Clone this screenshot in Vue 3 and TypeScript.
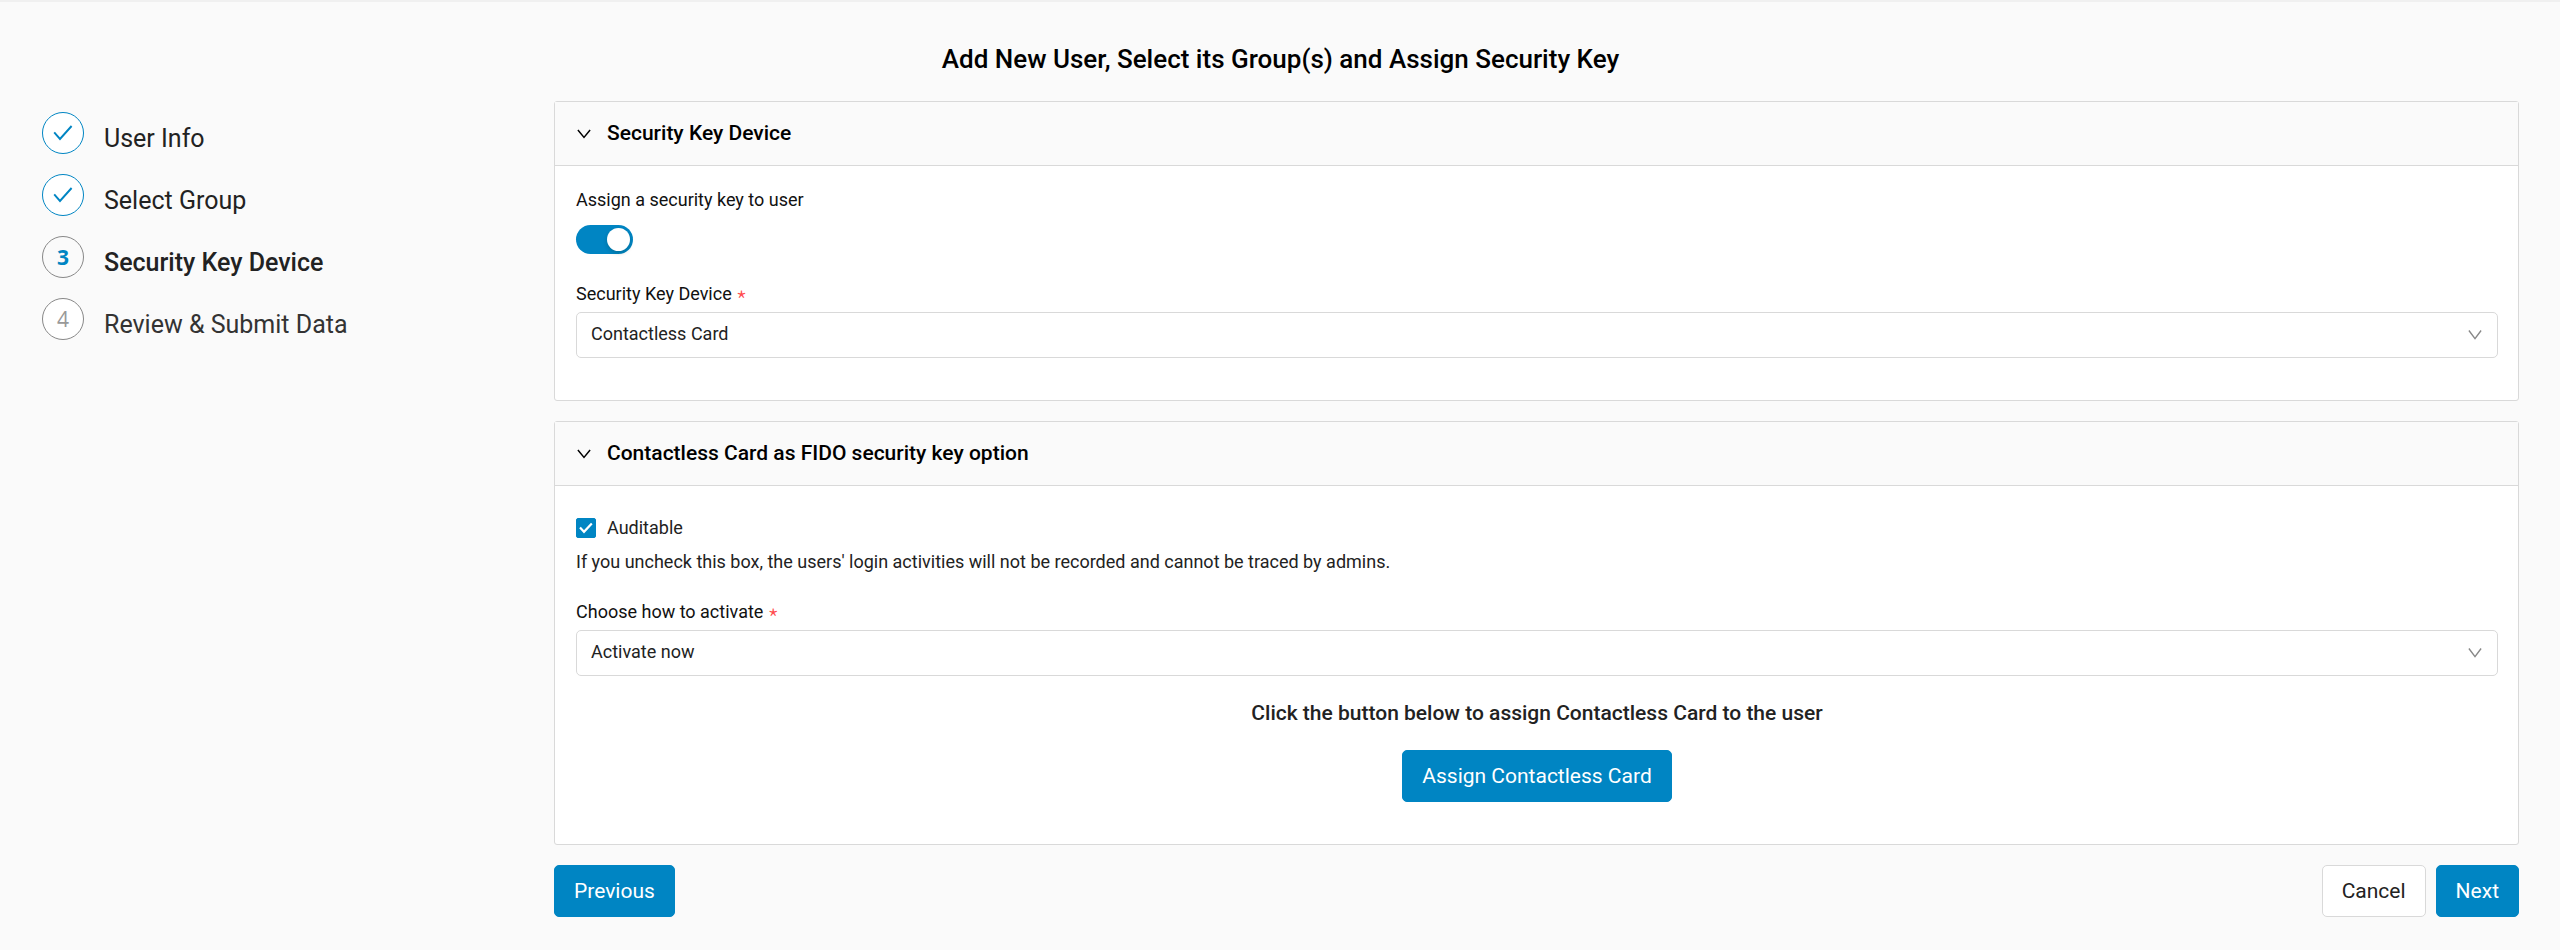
<script setup lang="ts">
import { ref } from 'vue'

interface Step {
  label: string
  state: 'done' | 'active' | 'waiting'
}

const steps: Step[] = [
  { label: 'User Info', state: 'done' },
  { label: 'Select Group', state: 'done' },
  { label: 'Security Key Device', state: 'active' },
  { label: 'Review & Submit Data', state: 'waiting' },
]

const assignKey = ref(true)
const auditable = ref(true)
const device = ref('Contactless Card')
const activation = ref('Activate now')
const deviceOpen = ref(true)
const optionOpen = ref(true)
</script>

<template>
  <div class="page">
    <h1 class="page-title">Add New User, Select its Group(s) and Assign Security Key</h1>
    <div class="layout">
      <nav aria-label="Progress">
        <ol class="steps">
          <li v-for="(step, i) in steps" :key="step.label" class="step" :class="step.state">
            <span class="step-icon">
              <svg v-if="step.state === 'done'" width="20" height="16" viewBox="0 0 20 16" aria-hidden="true">
                <path d="M1.2 7.4 7 14 18.6 1" fill="none" stroke="currentColor" stroke-width="1.9" />
              </svg>
              <template v-else>{{ i + 1 }}</template>
            </span>
            <span class="step-label">{{ step.label }}</span>
          </li>
        </ol>
      </nav>

      <main class="content">
        <section class="panel">
          <h2 class="panel-heading">
            <button type="button" class="panel-toggle" :aria-expanded="deviceOpen" @click="deviceOpen = !deviceOpen">
              <svg class="chevron" width="14" height="10" viewBox="0 0 14 10" aria-hidden="true">
                <path d="M.9 1 7 8.4 13.1 1" fill="none" stroke="currentColor" stroke-width="1.5" />
              </svg>
              Security Key Device
            </button>
          </h2>
          <div v-show="deviceOpen" class="panel-body">
            <label class="field-label" for="assign-key">Assign a security key to user</label>
            <input id="assign-key" v-model="assignKey" class="switch" type="checkbox" role="switch" />
            <div class="field">
              <label class="field-label" for="device">Security Key Device<span class="required">*</span></label>
              <div class="select-wrap">
                <select id="device" v-model="device" required>
                  <option>Contactless Card</option>
                </select>
                <svg class="select-arrow" width="14" height="10" viewBox="0 0 14 10" aria-hidden="true">
                  <path d="M.9 .5 7 8.6 13.1 .5" fill="none" stroke="currentColor" stroke-width="1.4" />
                </svg>
              </div>
            </div>
          </div>
        </section>

        <section class="panel">
          <h2 class="panel-heading">
            <button type="button" class="panel-toggle" :aria-expanded="optionOpen" @click="optionOpen = !optionOpen">
              <svg class="chevron" width="14" height="10" viewBox="0 0 14 10" aria-hidden="true">
                <path d="M.9 1 7 8.4 13.1 1" fill="none" stroke="currentColor" stroke-width="1.5" />
              </svg>
              Contactless Card as FIDO security key option
            </button>
          </h2>
          <div v-show="optionOpen" class="panel-body option-body">
            <label class="check-row">
              <span class="check-box">
                <input v-model="auditable" type="checkbox" />
                <svg v-if="auditable" class="check-mark" width="14" height="12" viewBox="0 0 14 12" aria-hidden="true">
                  <path d="M1 5.6 5 9.8 12.8 1.4" fill="none" stroke="#fff" stroke-width="2.2" />
                </svg>
              </span>
              Auditable
            </label>
            <p class="hint">If you uncheck this box, the users' login activities will not be recorded and cannot be traced by admins.</p>
            <div class="field">
              <label class="field-label" for="activation">Choose how to activate<span class="required">*</span></label>
              <div class="select-wrap">
                <select id="activation" v-model="activation" required>
                  <option>Activate now</option>
                </select>
                <svg class="select-arrow" width="14" height="10" viewBox="0 0 14 10" aria-hidden="true">
                  <path d="M.9 .5 7 8.6 13.1 .5" fill="none" stroke="currentColor" stroke-width="1.4" />
                </svg>
              </div>
            </div>
            <div class="assign">
              <p class="assign-text">Click the button below to assign Contactless Card to the user</p>
              <button type="button" class="btn primary">Assign Contactless Card</button>
            </div>
          </div>
        </section>

        <div class="actions">
          <button type="button" class="btn primary">Previous</button>
          <div class="actions-end">
            <button type="button" class="btn">Cancel</button>
            <button type="button" class="btn primary">Next</button>
          </div>
        </div>
      </main>
    </div>
  </div>
</template>

<style>
body {
  margin: 0;
  background: #fafafa;
}
</style>

<style scoped>
.page {
  box-sizing: border-box;
  min-height: 100vh;
  padding: 37px 41px 32px 42px;
  border-top: 2px solid #f0f0f0;
  background: #fafafa;
  color: #222;
  font: 18px/28px Roboto, sans-serif;
}

.page-title {
  margin: 0 0 22px;
  color: #000;
  font-size: 26px;
  font-weight: 500;
  line-height: 40px;
  text-align: center;
}

.layout {
  display: grid;
  grid-template-columns: 512px minmax(0, 1fr);
}

.steps {
  display: grid;
  gap: 20px;
  margin: 0;
  padding: 11px 0 0;
  list-style: none;
}

.step {
  display: flex;
  gap: 20px;
  height: 42px;
  color: #222;
}

.step-icon {
  display: flex;
  align-items: center;
  justify-content: center;
  box-sizing: border-box;
  width: 42px;
  height: 42px;
  border: 1px solid #888;
  border-radius: 50%;
  background: #fff;
  font-family: "Open Sans", sans-serif;
  font-size: 21px;
}

.step-label {
  padding-top: 7px;
  font-size: 25px;
  line-height: 40px;
}

.done .step-icon {
  border-color: #0085c3;
  color: #0085c3;
}

.active .step-icon {
  background: #fafafa;
  color: #0085c3;
  font-weight: 700;
}

.active .step-label {
  font-weight: 500;
}

.waiting .step-icon {
  color: #999;
}

.waiting .step-label {
  color: #333;
}

.panel {
  margin-bottom: 20px;
  border: 1px solid #d9d9d9;
  border-radius: 3px;
  background: #fff;
}

.panel-heading {
  margin: 0;
  border-bottom: 1px solid #d9d9d9;
  background: #fafafa;
}

.panel-toggle {
  display: flex;
  align-items: center;
  gap: 16px;
  width: 100%;
  padding: 16px 22px;
  border: 0;
  background: none;
  color: #000;
  font: 500 21px/31px Roboto, sans-serif;
  text-align: left;
}

.panel-body {
  padding: 20px 20px 42px 21px;
}

.field-label {
  display: block;
  color: #111;
}

.switch {
  display: flex;
  appearance: none;
  box-sizing: border-box;
  width: 57px;
  height: 29px;
  margin: 11px 0 26px;
  padding: 3px;
  border-radius: 15px;
  background: #999;
}

.switch::before {
  width: 23px;
  height: 23px;
  border-radius: 50%;
  background: #fff;
  box-shadow: 0 2px 4px rgba(0, 35, 11, 0.2);
  content: "";
}

.switch:checked {
  justify-content: flex-end;
  background: #0085c3;
}

.field .field-label {
  display: flex;
  gap: 4px;
  padding-bottom: 4px;
}

.required {
  height: 28px;
  color: #ff4d4f;
  font-family: "Noto Sans CJK SC", sans-serif;
  font-size: 26px;
  font-weight: 300;
  line-height: 40px;
}

.select-wrap {
  display: grid;
  align-items: center;
}

.select-wrap > * {
  grid-area: 1 / 1;
}

select {
  appearance: none;
  box-sizing: border-box;
  width: 100%;
  height: 46px;
  padding: 0 14px 3px;
  border: 1px solid #d9d9d9;
  border-radius: 5px;
  background: #fff;
  color: #222;
  font: 18px/28px Roboto, sans-serif;
}

.select-arrow {
  justify-self: end;
  margin-right: 16px;
  color: #888;
  pointer-events: none;
}

.option-body {
  padding-top: 28px;
}

.check-row {
  display: flex;
  align-items: center;
  gap: 11px;
}

.check-box {
  display: grid;
  place-items: center;
}

.check-box > * {
  grid-area: 1 / 1;
}

.check-box input {
  appearance: none;
  box-sizing: border-box;
  width: 20px;
  height: 20px;
  margin: 0;
  border: 1px solid #d9d9d9;
  border-radius: 2px;
  background: #fff;
}

.check-box input:checked {
  border-color: #0085c3;
  background: #0085c3;
}

.check-mark {
  pointer-events: none;
}

.hint {
  margin: 6px 0 22px;
}

.assign {
  display: flex;
  flex-direction: column;
  align-items: center;
  padding-top: 22px;
}

.assign-text {
  margin: 0 0 22px;
  font-size: 21px;
  font-weight: 500;
  line-height: 30px;
}

.btn {
  box-sizing: border-box;
  height: 52px;
  padding: 0 19px;
  border: 1px solid #d9d9d9;
  border-radius: 5px;
  background: #fff;
  color: #222;
  font: 21px/32px Roboto, sans-serif;
}

.btn.primary {
  border-color: #0085c3;
  background: #0085c3;
  color: #fff;
}

.actions,
.actions-end {
  display: flex;
  justify-content: space-between;
  gap: 10px;
}
</style>
